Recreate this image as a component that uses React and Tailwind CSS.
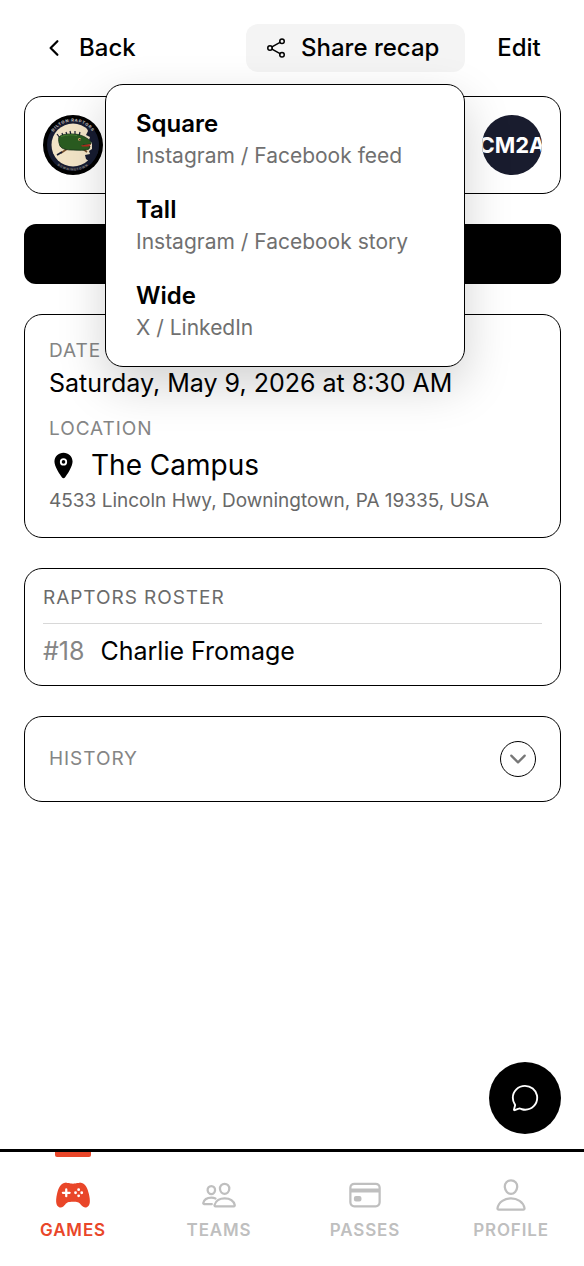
import React, { useState } from "react";
import {
  IoCardOutline,
  IoChatbubbleOutline,
  IoChevronBack,
  IoChevronDown,
  IoGameController,
  IoLocation,
  IoPeopleOutline,
  IoPersonOutline,
  IoShareSocialOutline,
} from "react-icons/io5";

const shareFormats = [
  { name: "Square", hint: "Instagram / Facebook feed" },
  { name: "Tall", hint: "Instagram / Facebook story" },
  { name: "Wide", hint: "X / LinkedIn" },
];

const tabs = [
  { label: "GAMES", icon: IoGameController, active: true },
  { label: "TEAMS", icon: IoPeopleOutline },
  { label: "PASSES", icon: IoCardOutline },
  { label: "PROFILE", icon: IoPersonOutline },
];

function RaptorsLogo() {
  return (
    <svg viewBox="0 0 60 60" className="size-[60px] shrink-0" role="img" aria-label="Raptors">
      <defs>
        <path id="crest-top" d="M6.5 30a23.5 23.5 0 0 1 47 0" />
        <path id="crest-bottom" d="M4.5 30a25.5 25.5 0 0 0 51 0" />
      </defs>
      <circle cx="30" cy="30" r="30" fill="#000" />
      <circle cx="30" cy="30" r="26" fill="#171c31" />
      <circle cx="30" cy="30" r="21.5" fill="#f2e4c7" />
      <path d="M43 11l2 5-2 4 4 2-1 3 3 3v6l-3 2 1 3-5 1 1 4 4 3 8-9 1-10-4-10z" fill="#171c31" />
      <text fill="#c9c3b8" fontSize="4" fontWeight="700" textAnchor="middle" letterSpacing="0.8">
        <textPath href="#crest-top" startOffset="50%">DILTON RAPTORS</textPath>
      </text>
      <text fill="#8b8579" fontSize="3" fontWeight="700" textAnchor="middle" letterSpacing="0.8">
        <textPath href="#crest-bottom" startOffset="50%">DOWNINGTOWN</textPath>
      </text>
      <path d="M24 34l-6 4M40 34l4 3" stroke="#76502f" strokeWidth="1.6" />
      <path d="M19 37l-5 3" stroke="#171c31" strokeWidth="1.6" />
      <path
        d="M17 23l-3-4M20 21l-1-3M24 20l-1-3M28 20l-1-4M32 20v-4M36 21l1-4"
        stroke="#171c31"
        strokeWidth="1.2"
      />
      <path
        d="M16 22c3-3 8-3 14-3 6 0 11 2 15 5 2 1 3 3 3 5l-8 1 7 1-1 3c-4 2-11 1-16 1-7 0-11-1-13-4-1-3-2-6-1-9z"
        fill="#2a5c20"
        stroke="#152f19"
        strokeWidth="0.8"
      />
      <path d="M18 21.5c6-2 11-2 16-1" fill="none" stroke="#478032" />
      <path d="M38 30.5l10-1.5-2 2.5-7 0z" fill="#b42b1d" />
      <circle cx="36.5" cy="24.5" r="1.4" fill="#d9ad6a" />
      <circle cx="36.9" cy="24.7" r="0.8" fill="#111" />
    </svg>
  );
}

function Card({ className, children }) {
  return <section className={`rounded-[18px] border border-black bg-white ${className}`}>{children}</section>;
}

function ShareMenu() {
  return (
    <div
      id="share-menu"
      className="absolute top-full right-0 z-10 mt-3 w-[360px] rounded-[18px] border border-black bg-white pt-3 pb-[11px] font-normal shadow-[0_18px_48px_rgba(0,0,0,0.18)]"
    >
      {shareFormats.map(({ name, hint }) => (
        <button key={name} type="button" className="block w-full px-[30px] py-[13px] text-left">
          <span className="block text-2xl leading-7 font-semibold">{name}</span>
          <span className="mt-1 block text-[21px] leading-7 text-[#707070]">{hint}</span>
        </button>
      ))}
    </div>
  );
}

function Header() {
  const [open, setOpen] = useState(true);

  return (
    <header className="flex h-12 items-stretch text-2xl leading-7 font-medium">
      <button type="button" className="flex items-center gap-[13px] px-[18px]">
        <IoChevronBack className="size-6" />
        Back
      </button>
      <div className="relative mr-3 ml-auto flex">
        <button
          type="button"
          aria-expanded={open}
          aria-controls="share-menu"
          onClick={() => setOpen(!open)}
          className="flex w-[219px] items-center gap-[13px] rounded-xl bg-[#f4f4f4] pl-[18px]"
        >
          <IoShareSocialOutline className="size-6" />
          <span className="whitespace-nowrap">Share recap</span>
        </button>
        {open && <ShareMenu />}
      </div>
      <button type="button" className="w-[84px] text-center">Edit</button>
    </header>
  );
}

function TabBar() {
  return (
    <nav className="grid grid-cols-4 border-t-3 border-black bg-white">
      {tabs.map(({ label, icon: Icon, active }) => (
        <a
          key={label}
          href="#"
          aria-current={active ? "page" : undefined}
          className={`flex flex-col items-center pb-[26px] ${active ? "text-[#e94629]" : "text-[#bfbfbf]"}`}
        >
          <span className={`h-[5px] w-9 rounded-b-xs ${active ? "bg-[#e94629]" : ""}`} />
          <Icon className="mt-5 size-9" />
          <span className="mt-[7px] text-[17px] leading-5 font-semibold tracking-wider">{label}</span>
        </a>
      ))}
    </nav>
  );
}

export default function App() {
  return (
    <div className="relative flex min-h-screen flex-col bg-white font-['Inter',sans-serif] text-black">
      <main className="flex flex-1 flex-col pt-6 pr-[23px] pb-24 pl-6">
        <Header />

        <div className="mt-6 flex flex-col gap-[30px]">
          <Card className="flex items-center justify-between p-[18px]">
            <RaptorsLogo />
            <div className="flex size-[60px] shrink-0 items-center justify-center overflow-hidden rounded-full bg-[#191c2e] text-[22px] font-bold text-white">
              CM2A
            </div>
          </Card>

          <button type="button" aria-label="Open game" className="h-[60px] rounded-xl bg-black" />

          <Card className="p-6">
            <h2 className="text-[19px] leading-6 tracking-wider text-[#858585]">DATE</h2>
            <p className="mt-[6px] text-[25px] leading-7">Saturday, May 9, 2026 at 8:30 AM</p>
            <h2 className="mt-5 text-[19px] leading-6 tracking-wider text-[#858585]">LOCATION</h2>
            <div className="mt-2 flex items-center gap-[13px]">
              <IoLocation className="size-[29px]" />
              <p className="text-[28px] leading-8">The Campus</p>
            </div>
            <p className="mt-2 text-[19px] leading-6 text-[#686868]">4533 Lincoln Hwy, Downingtown, PA 19335, USA</p>
          </Card>

          <Card className="px-[18px] pt-[17px] pb-5">
            <h2 className="border-b border-[#d8d8d8] pb-[13px] text-[19px] leading-6 tracking-wider text-[#6b6b6b]">
              RAPTORS ROSTER
            </h2>
            <p className="mt-[13px] flex gap-4 text-[25px] leading-7">
              <span className="text-[#858585]">#18</span>
              <span>Charlie Fromage</span>
            </p>
          </Card>

          <Card className="flex items-center justify-between p-6">
            <h2 className="text-[19px] leading-6 tracking-wider text-[#858585]">HISTORY</h2>
            <button
              type="button"
              aria-label="Show history"
              className="flex size-9 items-center justify-center rounded-full border border-black text-[#777777]"
            >
              <IoChevronDown className="size-6" />
            </button>
          </Card>
        </div>
      </main>

      <button
        type="button"
        aria-label="Open chat"
        className="absolute right-[23px] bottom-[132px] flex size-[72px] items-center justify-center rounded-full bg-black text-white"
      >
        <IoChatbubbleOutline className="size-[30px]" />
      </button>

      <TabBar />
    </div>
  );
}
